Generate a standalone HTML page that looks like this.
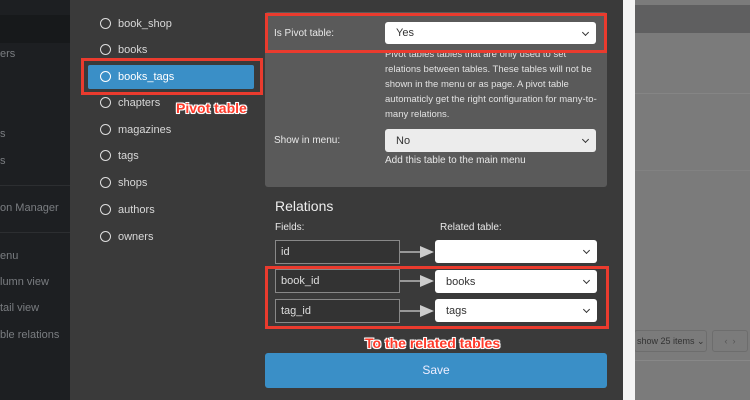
<!DOCTYPE html>
<html><head><style>
*{box-sizing:border-box;margin:0;padding:0}
body{width:750px;height:400px;overflow:hidden;background:#7b7b7b;font-family:"Liberation Sans",sans-serif;position:relative}
.a{position:absolute}
.side{left:0;top:0;width:70px;height:400px;background:#1d1f22;color:#7a7d81;font-size:11px}
.modal{left:70px;top:0;width:553px;height:400px;background:#3a3a3a}
.wstrip{left:623px;top:0;width:12px;height:400px;background:#f4f4f4}
.rad{color:#d8d8d8;font-size:11px}
.circ{position:absolute;width:11px;height:11px;border:1.5px solid #ddd;border-radius:50%}
.red{border:3px solid #ea3b2e}
.sel{background:#fff;border-radius:3px;color:#333;font-size:11px;padding-left:11px;display:flex;align-items:center}
.sel:after{content:"";position:absolute;right:8px;top:8px;width:4px;height:4px;border-right:1.5px solid #333;border-bottom:1.5px solid #333;transform:rotate(45deg)}
.inp{border:1.5px solid #888;color:#ddd;font-size:11px;padding-left:5px;display:flex;align-items:center;background:#333}
.lbl{color:#e8e8e8;font-size:10px}
.ann{color:#ff3a2a;font-weight:bold;font-size:14px;text-shadow:0 0 2px #fff,0 0 1px #fff,1px 1px 0 #fff,-1px -1px 0 #fff,1px -1px 0 #fff,-1px 1px 0 #fff}
.arr{height:2px;background:#999}
</style></head><body>
<div class="a side">
<div class="a" style="left:0;top:15px;width:70px;height:28px;background:#17191b"></div>
<div class="a" style="top:48px;left:0">ers</div>
<div class="a" style="top:128px;left:0">s</div>
<div class="a" style="top:155px;left:0">s</div>
<div class="a" style="top:185px;left:0;width:70px;border-top:1px solid #2c2e31"></div>
<div class="a" style="top:202px;left:0">on Manager</div>
<div class="a" style="top:232px;left:0;width:70px;border-top:1px solid #2c2e31"></div>
<div class="a" style="top:250px;left:0">enu</div>
<div class="a" style="top:276px;left:0">lumn view</div>
<div class="a" style="top:302px;left:0">tail view</div>
<div class="a" style="top:329px;left:0">ble relations</div>
</div>
<div class="a" style="left:634px;top:5px;width:116px;height:28px;background:#5f5f60"></div>
<div class="a" style="left:634px;top:93px;width:116px;border-top:1px solid #858585"></div>
<div class="a" style="left:634px;top:170px;width:116px;border-top:1px solid #828282"></div>
<div class="a" style="left:634px;top:360px;width:116px;border-top:1px solid #888"></div>
<div class="a" style="left:634px;top:330px;width:73px;height:22px;border:1px solid #6d6d6d;border-radius:3px;font-size:9px;color:#333;line-height:20px;padding-left:2px">show 25 items ⌄</div>
<div class="a" style="left:712px;top:330px;width:36px;height:22px;border:1px solid #6d6d6d;border-radius:3px;font-size:9px;color:#555;line-height:20px;text-align:center">‹ &nbsp;›</div>
<div class="a modal"></div>
<div class="a wstrip"></div>

<div class="a" style="left:88px;top:65px;width:166px;height:24px;background:#3a8fc7;border-radius:2px"></div>
<div class="a red" style="left:81px;top:58px;width:182px;height:37px"></div>
<div class="rad">
<div class="circ" style="left:100px;top:18px"></div><div class="a" style="left:118px;top:18px">book_shop</div>
<div class="circ" style="left:100px;top:44px"></div><div class="a" style="left:118px;top:44px">books</div>
<div class="circ" style="left:100px;top:71px;border-color:#fff"></div><div class="a" style="left:118px;top:71px;color:#fff">books_tags</div>
<div class="circ" style="left:100px;top:97px"></div><div class="a" style="left:118px;top:97px">chapters</div>
<div class="circ" style="left:100px;top:124px"></div><div class="a" style="left:118px;top:124px">magazines</div>
<div class="circ" style="left:100px;top:150px"></div><div class="a" style="left:118px;top:150px">tags</div>
<div class="circ" style="left:100px;top:177px"></div><div class="a" style="left:118px;top:177px">shops</div>
<div class="circ" style="left:100px;top:204px"></div><div class="a" style="left:118px;top:204px">authors</div>
<div class="circ" style="left:100px;top:231px"></div><div class="a" style="left:118px;top:231px">owners</div>
</div>
<div class="a ann" style="left:176px;top:100px">Pivot table</div>

<div class="a" style="left:265px;top:12px;width:342px;height:175px;background:#5a5a5a;border-radius:3px"></div>
<div class="a lbl" style="left:274px;top:28px">Is Pivot table:</div>
<div class="a sel" style="left:385px;top:22px;width:211px;height:22px">Yes</div>
<div class="a" style="left:385px;top:47px;width:215px;font-size:9.5px;line-height:15px;color:#e2e2e2">Pivot tables tables that are only used to set relations between tables. These tables will not be shown in the menu or as page. A pivot table automaticly get the right configuration for many-to-many relations.</div>
<div class="a red" style="left:265px;top:13px;width:342px;height:40px"></div>
<div class="a lbl" style="left:274px;top:135px">Show in menu:</div>
<div class="a sel" style="left:385px;top:129px;width:211px;height:23px;background:#ececec">No</div>
<div class="a lbl" style="left:385px;top:155px">Add this table to the main menu</div>

<div class="a" style="left:275px;top:198px;color:#eee;font-size:14px">Relations</div>
<div class="a lbl" style="left:275px;top:222px">Fields:</div>
<div class="a lbl" style="left:440px;top:222px">Related table:</div>

<div class="a inp" style="left:275px;top:240px;width:125px;height:24px">id</div>
<div class="a arr" style="left:400px;top:251px;width:22px"></div>
<div class="a" style="left:420px;top:246px;border-left:14px solid #ccc;border-top:6px solid transparent;border-bottom:6px solid transparent"></div>
<div class="a sel" style="left:435px;top:240px;width:162px;height:23px"></div>

<div class="a inp" style="left:275px;top:269px;width:125px;height:24px">book_id</div>
<div class="a arr" style="left:400px;top:280px;width:22px"></div>
<div class="a" style="left:420px;top:275px;border-left:14px solid #ccc;border-top:6px solid transparent;border-bottom:6px solid transparent"></div>
<div class="a sel" style="left:435px;top:270px;width:162px;height:23px">books</div>

<div class="a inp" style="left:275px;top:299px;width:125px;height:24px">tag_id</div>
<div class="a arr" style="left:400px;top:310px;width:22px"></div>
<div class="a" style="left:420px;top:305px;border-left:14px solid #ccc;border-top:6px solid transparent;border-bottom:6px solid transparent"></div>
<div class="a sel" style="left:435px;top:299px;width:162px;height:23px">tags</div>

<div class="a red" style="left:265px;top:266px;width:344px;height:63px"></div>
<div class="a ann" style="left:365px;top:335px">To the related tables</div>
<div class="a" style="left:265px;top:353px;width:342px;height:35px;background:#3a8fc7;border-radius:3px;color:#eef;font-size:12px;text-align:center;line-height:35px">Save</div>
</body></html>
